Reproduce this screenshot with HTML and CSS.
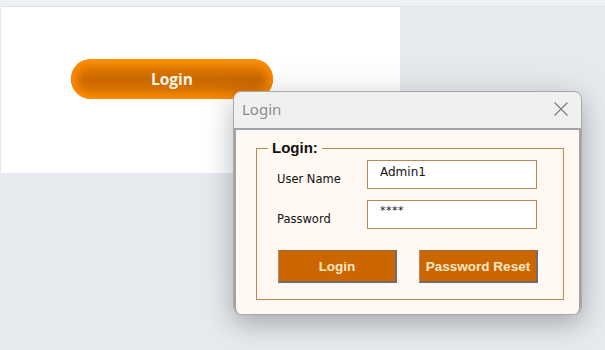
FILE: index.html
```html
<!DOCTYPE html>
<html>
<head>
<meta charset="utf-8">
<link rel="stylesheet" href="styles.css">
</head>
<body>
<div class="topstrip"></div>
<main class="stage">
  <section class="sheet">
    <button class="pill">Login</button>
  </section>
</main>
<div class="dialog">
  <div class="titlebar">
    <span class="title">Login</span>
    <svg class="close" width="14" height="14" viewBox="0 0 14 14"><path d="M0.5 0.5 L13.5 13.5 M13.5 0.5 L0.5 13.5" stroke="#7a7a7a" stroke-width="1.1" fill="none"/></svg>
  </div>
  <div class="dbody">
    <fieldset class="group">
      <legend class="legend">Login:</legend>
      <div class="form">
        <label class="lbl">User Name</label>
        <div class="field">Admin1</div>
        <label class="lbl">Password</label>
        <div class="field pw">****</div>
      </div>
      <div class="actions">
        <button class="btn">Login</button>
        <button class="btn">Password Reset</button>
      </div>
    </fieldset>
  </div>
</div>
</body>
</html>
```
FILE: styles.css
```css
html, body {
  margin: 0;
  padding: 0;
}
body {
  width: 605px;
  height: 350px;
  background: #e6eaef;
  font-family: "Liberation Sans", Arial, sans-serif;
  position: relative;
  overflow: hidden;
}
.topstrip {
  height: 6px;
  background: #eef1f4;
  border-bottom: 1px solid #dfe3e8;
}
.stage {
  display: block;
}
.sheet {
  width: 399px;
  height: 166px;
  margin-left: 1px;
  background: #ffffff;
  padding-top: 52px;
  padding-left: 70px;
  box-sizing: border-box;
}
.pill {
  display: block;
  width: 202px;
  height: 40px;
  border: none;
  border-radius: 20px;
  background: linear-gradient(#ff9800 0%, #e07800 25%, #c86800 50%, #d87200 75%, #ff8e00 100%);
  box-shadow: inset 10px 0 10px -4px #ff8a00, inset -10px 0 10px -4px #ff8a00;
  color: #fff4e6;
  font-family: "Open Sans", sans-serif;
  font-weight: 700;
  font-size: 15.5px;
  padding: 0;
  margin: 0;
}
.dialog {
  position: absolute;
  left: 233px;
  top: 91px;
  width: 349px;
  height: 224px;
  box-sizing: border-box;
  border: 1px solid #a9a9a9;
  border-radius: 8px;
  background: #f0f0f0;
  box-shadow: 0 10px 24px rgba(0,0,0,0.22), 0 0 40px rgba(0,0,0,0.08);
  display: flex;
  flex-direction: column;
  overflow: hidden;
}
.titlebar {
  height: 36px;
  flex: none;
  display: flex;
  align-items: center;
  justify-content: space-between;
  padding: 0 13px 2px 8px;
  box-sizing: border-box;
}
.title {
  font-family: "Noto Sans", sans-serif;
  font-size: 15px;
  color: #8c8c8c;
}
.close {
  display: block;
}
.dbody {
  flex: 1;
  background: #fff8f3;
  border: 2px solid #a3a3a3;
  border-bottom: none;
  border-radius: 0 0 7px 7px;
  padding: 10px 15px 0 20px;
}
.group {
  margin: 0;
  width: 308px;
  height: 160px;
  box-sizing: border-box;
  border: 1px solid #b8884f;
  padding: 4px 0 0 20px;
}
.legend {
  margin-left: -9px;
  padding: 0 4px;
  font-size: 15px;
  font-weight: 700;
  color: #111;
  line-height: 16px;
}
.form {
  display: grid;
  grid-template-columns: 90px 170px;
  row-gap: 11px;
  align-items: center;
}
.lbl {
  font-family: "DejaVu Sans", sans-serif;
  font-size: 11.5px;
  color: #111;
  padding-top: 9px;
}
.field {
  height: 29px;
  box-sizing: border-box;
  border: 1px solid #b8884f;
  background: #ffffff;
  padding: 4px 0 0 12px;
  font-family: "DejaVu Sans", sans-serif;
  font-size: 12px;
  color: #111;
}
.field.pw {
  font-size: 11px;
  padding-top: 3px;
  letter-spacing: 0.5px;
}
.actions {
  display: flex;
  gap: 22px;
  margin-top: 21px;
  padding-left: 1px;
}
.btn {
  width: 119px;
  height: 33px;
  box-sizing: border-box;
  background: #cc6600;
  border-top: 1px solid #9a6a40;
  border-left: 1px solid #b08a6a;
  border-right: 2px solid #6e6e6e;
  border-bottom: 2px solid #6e6e6e;
  color: #fde6c4;
  font-family: "Liberation Sans", Arial, sans-serif;
  font-weight: 700;
  font-size: 13.5px;
  padding: 0;
}
```
